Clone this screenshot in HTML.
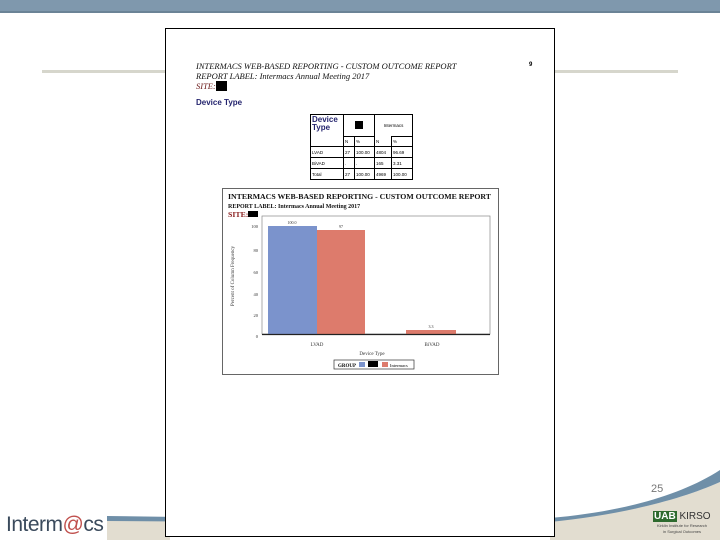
<!DOCTYPE html>
<html><head><style>
body{margin:0;width:720px;height:540px;overflow:hidden;background:#fff;position:relative;font-family:"Liberation Sans",sans-serif}
.a{position:absolute}
.serif{font-family:"Liberation Serif",serif}
table{border-collapse:collapse}
</style></head><body>
<div class="a" style="left:0;top:0;width:720px;height:11px;background:#7f98ad;border-bottom:2px solid #6b8396"></div>
<div class="a" style="left:42px;top:70px;width:636px;height:3px;background:#d6d6cc"></div>
<svg class="a" style="left:0;top:0" width="720" height="540">
<path d="M107 517 L170 517 L170 540 L107 540 Z" fill="#e2ddd0"/>
<path d="M107 516 L250 518 L250 522 L107 521 Z" fill="#6f8fa8"/>
<path d="M550 540 L550 521 C620 515 680 500 720 482 L720 540 Z" fill="#e2ddd0"/>
<path d="M550 518 C620 512 680 496 720 470 L720 482 C680 500 620 515 550 522 Z" fill="#6f8fa8"/>
</svg>
<div class="a" style="left:165px;top:28px;width:388px;height:507px;border:1.5px solid #000;background:#fff"></div>
<div class="a serif" style="left:196px;top:61px;font-size:8.5px;line-height:10px;font-style:italic;color:#111">INTERMACS WEB-BASED REPORTING - CUSTOM OUTCOME REPORT<br>REPORT LABEL: Intermacs Annual Meeting 2017<br><span style="color:#6b1a1a">SITE:</span><span style="display:inline-block;width:11px;height:10px;background:#000;vertical-align:-2px"></span></div>
<div class="a" style="left:529px;top:62px;font-size:6px;font-weight:bold">9</div>
<div class="a" style="left:196px;top:98px;font-size:8px;font-weight:bold;color:#24246e">Device Type</div>
<table class="a" style="left:310px;top:114px;font-size:4.5px;border:1.5px solid #000">
<tr style="height:22px"><td rowspan="2" style="width:30px;border:1px solid #000;color:#24246e;font-size:8px;font-weight:bold;line-height:8px;vertical-align:top">Device Type</td><td colspan="2" style="border:1px solid #000;text-align:center"><span style="display:inline-block;width:8px;height:8px;background:#000"></span></td><td colspan="2" style="border-left:1.5px solid #000;text-align:center">Intermacs</td></tr>
<tr style="height:10px"><td style="width:8px;border:1px solid #000">N</td><td style="width:17px;border:1px solid #000">%</td><td style="width:14px;border-left:1.5px solid #000">N</td><td style="width:18px;border:1px solid #000">%</td></tr>
<tr style="height:11px"><td style="border:1px solid #000">LVAD</td><td style="border:1px solid #000">27</td><td style="border:1px solid #000">100.00</td><td style="border:1px solid #000">4804</td><td style="border:1px solid #000">96.69</td></tr>
<tr style="height:11px"><td style="border:1px solid #000">BiVAD</td><td style="border:1px solid #000">.</td><td style="border:1px solid #000">.</td><td style="border:1px solid #000">165</td><td style="border:1px solid #000">3.31</td></tr>
<tr style="height:11px"><td style="border:1px solid #000">Total</td><td style="border:1px solid #000">27</td><td style="border:1px solid #000">100.00</td><td style="border:1px solid #000">4969</td><td style="border:1px solid #000">100.00</td></tr>
</table>
<div class="a" style="left:222px;top:188px;width:275px;height:185px;border:1px solid #666;background:#fff"></div>
<div class="a serif" style="left:228px;top:193px;font-size:7.8px;line-height:8.5px;font-weight:bold;color:#111">INTERMACS WEB-BASED REPORTING - CUSTOM OUTCOME REPORT<br><span style="font-size:6px">REPORT LABEL: Intermacs Annual Meeting 2017</span><br><span style="color:#8b2020">SITE:</span><span style="display:inline-block;width:10px;height:6px;background:#000"></span></div>
<svg class="a serif" style="left:222px;top:188px;font-family:'Liberation Serif',serif" width="276" height="186">
<rect x="40" y="28" width="228" height="118" fill="none" stroke="#888" stroke-width="0.7"/>
<rect x="46" y="38" width="49" height="108" fill="#7b93cc"/>
<rect x="95" y="42" width="48" height="104" fill="#dd7b6c"/>
<rect x="184" y="142" width="50" height="4" fill="#dd7b6c"/>
<line x1="40" y1="146.5" x2="268" y2="146.5" stroke="#222" stroke-width="1.3"/>
<g font-size="4.5" fill="#333" text-anchor="end"><text x="36" y="40">100</text><text x="36" y="64">80</text><text x="36" y="86">60</text><text x="36" y="108">40</text><text x="36" y="129">20</text><text x="36" y="150">0</text></g>
<g font-size="4" fill="#333" text-anchor="middle"><text x="70" y="36">100.0</text><text x="119" y="40">97</text><text x="209" y="140">3.3</text></g>
<g font-size="5" fill="#333" text-anchor="middle"><text x="95" y="158">LVAD</text><text x="210" y="158">BiVAD</text><text x="150" y="167">Device Type</text></g>
<text x="12" y="88" font-size="5" fill="#333" text-anchor="middle" transform="rotate(-90 12 88)">Percent of Column Frequency</text>
<rect x="112" y="172" width="80" height="9" fill="#fff" stroke="#333" stroke-width="0.7"/>
<text x="116" y="179" font-size="5" font-weight="bold">GROUP</text>
<rect x="137" y="174" width="6" height="5" fill="#7b93cc"/><rect x="146" y="173" width="10" height="6" fill="#000"/><rect x="160" y="174" width="6" height="5" fill="#dd7b6c"/>
<text x="168" y="179" font-size="4.5">Intermacs</text>
</svg>
<div class="a" style="left:651px;top:483px;font-size:11px;color:#777">25</div>
<div class="a" style="left:6px;top:513px;font-size:21px;color:#3a4a5c;letter-spacing:-0.5px">Interm<span style="color:#c0504d">@</span>cs</div>
<div class="a" style="left:653px;top:511px;font-size:10px;color:#2d5c2d"><b style="background:#2e6a2e;color:#fff;padding:0 1px">UAB</b> <span style="color:#333">KIRSO</span></div>
<div class="a" style="left:650px;top:523px;font-size:4px;line-height:6px;color:#444;text-align:center;width:64px">Kirklin Institute for Research<br>in Surgical Outcomes</div>
</body></html>
